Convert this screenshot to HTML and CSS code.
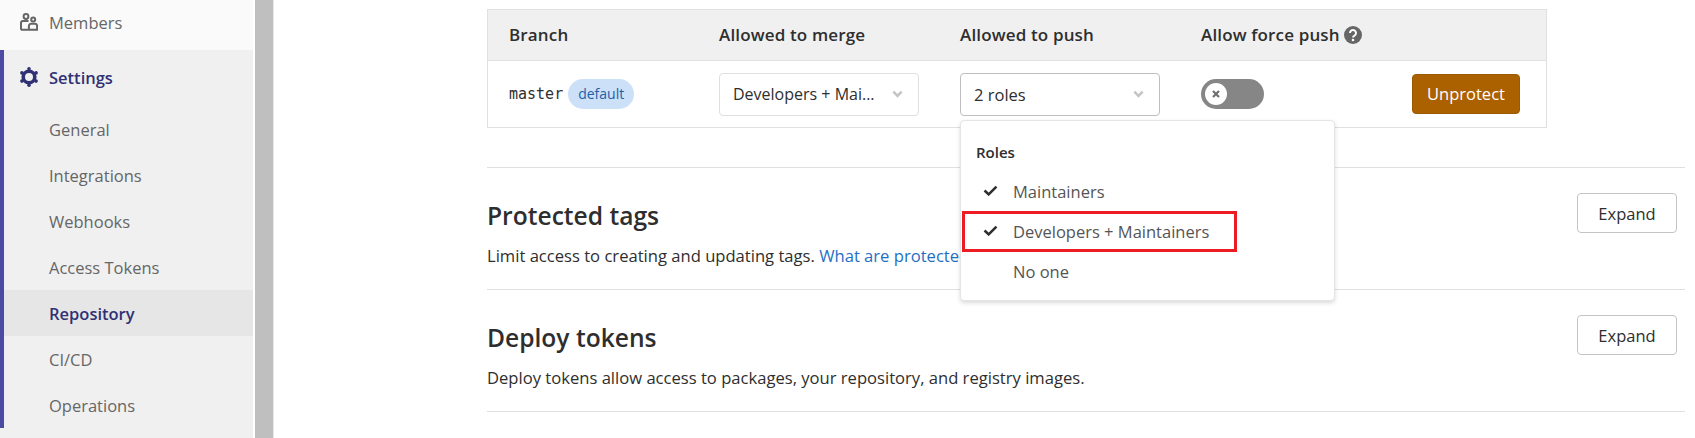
FILE: index.html
```html
<!DOCTYPE html>
<html lang="en">
<head>
    <meta charset="UTF-8">
    <title>Repository Settings</title>
    <link rel="stylesheet" href="styles.css">
</head>
<body>

<div class="sidebar">
    <a class="nav-top">
        <svg class="nav-icon" viewBox="0 0 18 18" fill="none" stroke="#666" stroke-width="2"><circle cx="6" cy="3.500" r="2.400"/><circle cx="13.200" cy="6.500" r="2"/><path d="M1 16.800V10a2 2 0 0 1 2-2h5.500"/><path d="M.9 16.800h16.200V13a2.200 2.200 0 0 0-2.200-2.200h-3.800A2.200 2.200 0 0 0 8.900 13v3.800"/></svg>
        <span>Members</span>
    </a>
    <div class="nav-group">
        <a class="nav-head">
            <svg class="nav-icon gear" viewBox="0 0 20 20"><circle cx="10" cy="10" r="5.800" fill="none" stroke="#303075" stroke-width="3.600"/><g fill="#303075"><circle cx="10" cy="1.800" r="1.800"/><circle cx="10" cy="18.200" r="1.800"/><circle cx="2.900" cy="5.900" r="1.800"/><circle cx="17.100" cy="5.900" r="1.800"/><circle cx="2.900" cy="14.100" r="1.800"/><circle cx="17.100" cy="14.100" r="1.800"/></g></svg>
            <span>Settings</span>
        </a>
        <a class="nav-item">General</a>
        <a class="nav-item">Integrations</a>
        <a class="nav-item">Webhooks</a>
        <a class="nav-item">Access Tokens</a>
        <a class="nav-item active">Repository</a>
        <a class="nav-item">CI/CD</a>
        <a class="nav-item">Operations</a>
    </div>
</div>
<div class="scrollbar"></div>

<div class="main">
    <div class="branch-table">
        <div class="table-row table-head">
            <div class="col-branch">Branch</div>
            <div class="col-merge">Allowed to merge</div>
            <div class="col-push">Allowed to push</div>
            <div class="col-force">Allow force push
                <svg class="help" viewBox="0 0 18 18"><circle cx="9" cy="9" r="9" fill="#666"/><path d="M6 7a3 3 0 1 1 4.600 2.500C9.500 10.200 9 10.600 9 11.400" fill="none" stroke="#fff" stroke-width="2"/><circle cx="9" cy="14" r="1.300" fill="#fff"/></svg>
            </div>
        </div>
        <div class="table-row table-body">
            <div class="col-branch"><code class="branch-name">master</code><span class="badge">default</span></div>
            <div class="col-merge">
                <div class="select"><span>Developers + Mai...</span><svg class="chevron" viewBox="0 0 12 8"><path d="M1.500 1.500 6 6l4.500-4.500" fill="none" stroke="#c4c4c4" stroke-width="2.800"/></svg></div>
            </div>
            <div class="col-push">
                <div class="select"><span>2 roles</span><svg class="chevron" viewBox="0 0 12 8"><path d="M1.500 1.500 6 6l4.500-4.500" fill="none" stroke="#c4c4c4" stroke-width="2.800"/></svg></div>
            </div>
            <div class="col-force">
                <div class="toggle"><span class="knob"><svg viewBox="0 0 10 10"><path d="M2 2l6 6M8 2 2 8" stroke="#707070" stroke-width="2.200"/></svg></span></div>
            </div>
            <button class="btn-unprotect">Unprotect</button>
        </div>
    </div>

    <div class="section first">
        <div>
            <h4>Protected tags</h4>
            <p>Limit access to creating and updating tags. <a>What are protected tags?</a></p>
        </div>
        <button class="btn-expand">Expand</button>
    </div>
    <div class="section">
        <div>
            <h4>Deploy tokens</h4>
            <p>Deploy tokens allow access to packages, your repository, and registry images.</p>
        </div>
        <button class="btn-expand">Expand</button>
    </div>

    <div class="dropdown">
        <div class="dropdown-title">Roles</div>
        <div class="dropdown-item"><svg class="check" viewBox="0 0 16 12"><path d="M1.500 6 6 10.200 14.500 1.800" fill="none" stroke="#2e2e2e" stroke-width="2.800"/></svg>Maintainers</div>
        <div class="dropdown-item"><svg class="check" viewBox="0 0 16 12"><path d="M1.500 6 6 10.200 14.500 1.800" fill="none" stroke="#2e2e2e" stroke-width="2.800"/></svg>Developers + Maintainers</div>
        <div class="dropdown-item">No one</div>
    </div>
    <div class="highlight"></div>
</div>

</body>
</html>
```

FILE: styles.css
```css
body {
    margin: 0;
    height: 438px;
    overflow: hidden;
    display: flex;
    font-family: "Open Sans", "Noto Sans", sans-serif;
    font-size: 16.5px;
    color: #2e2e2e;
    background: #fff;
}

.sidebar {
    width: 253px;
    height: 438px;
    flex-shrink: 0;
    background: #f0f0f0;
    color: #666;
}
.nav-top {
    height: 44px;
    padding-bottom: 6px;
    display: flex;
    align-items: center;
    gap: 11px;
    padding-left: 20px;
    background: #fafafa;
}
.nav-icon {
    width: 18px;
    height: 18px;
}
.nav-icon.gear {
    width: 20px;
    height: 20px;
    margin-left: -1px;
    margin-right: -1px;
}
.nav-group {
    border-left: 4px solid #4b4ba3;
}
.nav-head {
    height: 54px;
    padding-bottom: 2px;
    display: flex;
    align-items: center;
    gap: 11px;
    padding-left: 16px;
    font-weight: 600;
    color: #303075;
}
.nav-item {
    display: flex;
    align-items: center;
    height: 45px;
    padding-top: 1px;
    padding-left: 45px;
}
.nav-item.active {
    font-weight: 600;
    color: #303075;
    background: #e6e6e6;
}

.scrollbar {
    width: 19px;
    flex-shrink: 0;
    margin-left: 2px;
    border-right: 1px solid #e8e8e8;
    background: #bfbfbf;
    box-sizing: border-box;
}

.main {
    position: relative;
    flex: 1;
    padding: 9px 10px 0 213px;
}

.branch-table {
    width: 1060px;
    border: 1px solid #e0e0e0;
    box-sizing: border-box;
}
.table-row {
    display: flex;
    align-items: center;
}
.table-head {
    height: 48px;
    padding-bottom: 2px;
    background: #f0f0f0;
    border-bottom: 1px solid #e0e0e0;
    font-size: 17px;
    letter-spacing: 0.15px;
    font-weight: 600;
}
.table-body {
    height: 66px;
}
.col-branch { width: 231px; padding-left: 21px; box-sizing: border-box; display: flex; align-items: center; }
.col-merge, .col-push { width: 241px; }
.col-force { width: 211px; }
.help {
    width: 18px;
    height: 18px;
    vertical-align: -3px;
}

.branch-name {
    font-family: "DejaVu Sans Mono", monospace;
    font-size: 15px;
}
.badge {
    margin-left: 5px;
    padding: 0 10px;
    height: 30px;
    line-height: 30px;
    border-radius: 15px;
    background: #cce0f8;
    color: #1f5fa8;
    font-size: 14px;
}

.select {
    width: 200px;
    height: 43px;
    display: flex;
    align-items: center;
    justify-content: space-between;
    box-sizing: border-box;
    padding: 0 15px 0 13px;
    border: 1px solid #dfdfdf;
    border-radius: 4px;
    background: #fff;
    font-size: 16px;
}
.col-push .select {
    border-color: #bfbfbf;
    font-size: 16.5px;
}
.chevron {
    width: 11px;
    height: 8px;
}

.toggle {
    width: 63px;
    height: 30px;
    border-radius: 15px;
    background: #868686;
    display: flex;
    align-items: center;
    padding-left: 4px;
    box-sizing: border-box;
}
.knob {
    width: 22px;
    height: 22px;
    border-radius: 50%;
    background: #fff;
    display: flex;
    align-items: center;
    justify-content: center;
}
.knob svg {
    width: 10px;
    height: 10px;
}

.btn-unprotect {
    width: 108px;
    height: 40px;
    padding-bottom: 3px;
    border: 1px solid #9a5a00;
    border-radius: 4px;
    background: #ab6100;
    color: #fff;
    font: inherit;
}

.section {
    width: 1198px;
    height: 121px;
    border-bottom: 1px solid #dfdfdf;
    display: flex;
    justify-content: space-between;
    align-items: flex-start;
}
.section.first {
    margin-top: 39px;
    border-top: 1px solid #dfdfdf;
}
.section h4 {
    margin: 31px 0 0;
    font-size: 24.6px;
    line-height: 33px;
    font-weight: 600;
}
.section p {
    margin: 12px 0 0;
    line-height: 24px;
    font-size: 16.6px;
}
.section a {
    color: #1f6fc4;
}
.btn-expand {
    width: 100px;
    height: 40px;
    margin: 25px 8px 0 0;
    border: 1px solid #c4c4c4;
    border-radius: 4px;
    background: #fff;
    color: #2e2e2e;
    font: inherit;
}

.dropdown {
    position: absolute;
    left: 686px;
    top: 120px;
    width: 375px;
    height: 181px;
    box-sizing: border-box;
    padding-top: 17px;
    background: #fff;
    border: 1px solid #e5e5e5;
    border-radius: 4px;
    box-shadow: 0 2px 4px rgba(0, 0, 0, 0.15);
}
.dropdown-title {
    padding-left: 15px;
    height: 34px;
    line-height: 28px;
    font-size: 15px;
    font-weight: 600;
}
.dropdown-item {
    position: relative;
    height: 40px;
    line-height: 40px;
    padding-left: 52px;
    color: #555;
}
.check {
    position: absolute;
    left: 22px;
    top: 13px;
    width: 15px;
    height: 11px;
}

.highlight {
    position: absolute;
    left: 688px;
    top: 211px;
    width: 275px;
    height: 41px;
    box-sizing: border-box;
    border: 3px solid #ed1c24;
}
```
